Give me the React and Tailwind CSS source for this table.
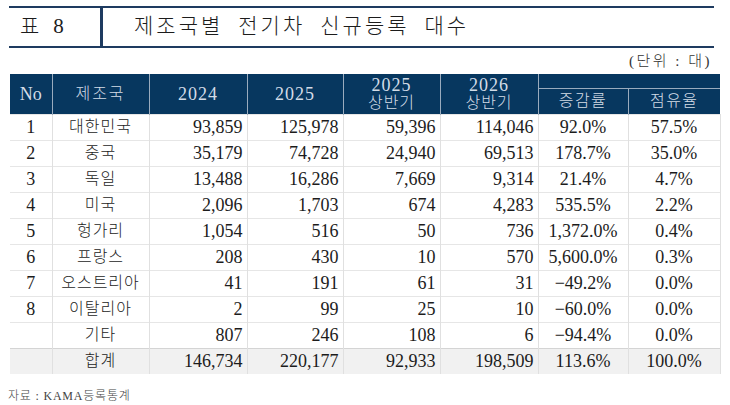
const rows = [
  ["1", "대한민국", "93,859", "125,978", "59,396", "114,046", "92.0%", "57.5%"],
  ["2", "중국", "35,179", "74,728", "24,940", "69,513", "178.7%", "35.0%"],
  ["3", "독일", "13,488", "16,286", "7,669", "9,314", "21.4%", "4.7%"],
  ["4", "미국", "2,096", "1,703", "674", "4,283", "535.5%", "2.2%"],
  ["5", "헝가리", "1,054", "516", "50", "736", "1,372.0%", "0.4%"],
  ["6", "프랑스", "208", "430", "10", "570", "5,600.0%", "0.3%"],
  ["7", "오스트리아", "41", "191", "61", "31", "−49.2%", "0.0%"],
  ["8", "이탈리아", "2", "99", "25", "10", "−60.0%", "0.0%"],
  ["", "기타", "807", "246", "108", "6", "−94.4%", "0.0%"],
];

const total = ["", "합계", "146,734", "220,177", "92,933", "198,509", "113.6%", "100.0%"];

const widths = ["w-[42px]", "w-[97px]", "w-[98px]", "w-[96px]", "w-[97px]", "w-[98px]", "w-[90px]", "w-[92px]"];

function BodyRow({ cells, last }) {
  return (
    <tr className={last ? "h-[26px] bg-[#f1f1f1] border-t border-[#d4d4d4]" : "h-[26px] border-t border-[#e6e6e6]"}>
      {cells.map((c, i) => {
        let align = "text-right pr-[4px]";
        if (i < 2) align = "text-center";
        if (i >= 6) align = "text-center";
        return (
          <td
            key={i}
            className={`${align} p-0 leading-none ${i > 0 ? "border-l border-[#e0e0e0]" : ""} ${i === 7 ? "border-r border-[#cfcfcf]" : ""} ${i === 1 ? "text-[16px] font-light tracking-[1px]" : "text-[18px]"}`}
          >
            {c}
          </td>
        );
      })}
    </tr>
  );
}

export default function App() {
  return (
    <div className="w-[730px] h-[405px] bg-white pt-[6px] font-['Liberation_Serif','Noto_Sans_CJK_KR',serif] text-[#1c1c1c]">
      {/* title */}
      <div className="ml-[9px] w-[705px] h-[42px] border-y-2 border-[#1e3b60] flex items-center">
        <div className="w-[94px] h-full border-r-[3px] border-[#1e3b60] flex items-center pl-[11px] text-[21px] font-light">
          <span>표</span>
          <span className="ml-[14px]">8</span>
        </div>
        <div className="ml-[31px] flex gap-[15px] text-[21px] tracking-[3px] font-light whitespace-nowrap">
          <span>제조국별</span>
          <span>전기차</span>
          <span>신규등록</span>
          <span>대수</span>
        </div>
      </div>

      <div className="h-[26px] w-[712px] flex items-center justify-end text-[15px] font-light tracking-[2.5px] text-[#333]">
        (단위 : 대)
      </div>

      {/* table */}
      <table className="ml-[10px] w-[710px] border-collapse table-fixed">
        <colgroup>
          {widths.map((w, i) => (
            <col key={i} className={w} />
          ))}
        </colgroup>
        <thead className="bg-[#07375f] text-[#d3dce7] font-normal">
          <tr className="h-[14px]">
            <th rowSpan={2} className="p-0 font-normal text-[18px] leading-none">No</th>
            <th rowSpan={2} className="p-0 font-light text-[16px] leading-none border-l border-[#9aabbd] tracking-[2px]">제조국</th>
            <th rowSpan={2} className="p-0 font-normal text-[18px] leading-none border-l border-[#9aabbd] tracking-[1px]">2024</th>
            <th rowSpan={2} className="p-0 font-normal text-[18px] leading-none border-l border-[#9aabbd] tracking-[1px]">2025</th>
            <th rowSpan={2} className="p-0 font-normal leading-[17px] border-l border-[#9aabbd]">
              <div className="text-[18px] tracking-[1px]">2025</div>
              <div className="text-[16px] font-light tracking-[1px]">상반기</div>
            </th>
            <th rowSpan={2} className="p-0 font-normal leading-[17px] border-l border-[#9aabbd]">
              <div className="text-[18px] tracking-[1px]">2026</div>
              <div className="text-[16px] font-light tracking-[1px]">상반기</div>
            </th>
            <th colSpan={2} className="p-0 border-l border-[#9aabbd]"></th>
          </tr>
          <tr className="h-[26px]">
            <th className="p-0 font-light text-[16px] leading-none border-t border-l border-[#9aabbd] tracking-[1.5px]">증감률</th>
            <th className="p-0 font-light text-[16px] leading-none border-t border-l border-[#9aabbd] tracking-[1.5px]">점유율</th>
          </tr>
        </thead>
        <tbody>
          {rows.map((r, i) => (
            <BodyRow key={i} cells={r} />
          ))}
          <BodyRow cells={total} last />
        </tbody>
      </table>

      <div className="mt-[13px] ml-[8px] text-[12px] font-light text-[#444] tracking-[0.8px]">자료 : KAMA등록통계</div>
    </div>
  );
}
